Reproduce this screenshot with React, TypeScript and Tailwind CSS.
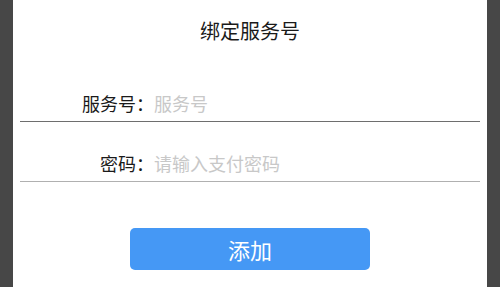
import React from "react";

const font = { fontFamily: '"Noto Sans CJK SC", "Noto Sans", sans-serif' };

export default function App() {
  return (
    <div className="w-[500px] h-[287px] bg-[#474747] flex justify-center overflow-hidden" style={font}>
      <div className="w-[474px] h-full bg-white px-[7px] flex flex-col">
        <div className="pt-[17px] h-[45px] text-center text-[20px] leading-[28px] text-[#1a1a1a]">
          绑定服务号
        </div>
        <div className="mt-[35px] flex items-center pt-[10px] pb-[5px] border-b border-[#6e6e6e]">
          <label className="w-[134px] shrink-0 text-right text-[18px] leading-[26px] text-[#1a1a1a]">服务号：</label>
          <input
            className="flex-1 min-w-0 bg-transparent outline-none text-[18px] leading-[26px] h-[26px] text-[#1a1a1a] placeholder:text-[#c8c8c8]"
            placeholder="服务号"
            style={font}
          />
        </div>
        <div className="flex items-center pt-[28px] pb-[5px] border-b border-[#b0b0b0]">
          <label className="w-[134px] shrink-0 text-right text-[18px] leading-[26px] text-[#1a1a1a]">密码：</label>
          <input
            type="text"
            className="flex-1 min-w-0 bg-transparent outline-none text-[18px] leading-[26px] h-[26px] text-[#1a1a1a] placeholder:text-[#c8c8c8]"
            placeholder="请输入支付密码"
            style={font}
          />
        </div>
        <div className="mt-[46px] flex justify-center">
          <button
            className="w-[240px] h-[42px] rounded-[5px] bg-[#4598f5] text-white text-[22px] leading-[42px]"
            style={font}
          >
            添加
          </button>
        </div>
      </div>
    </div>
  );
}
